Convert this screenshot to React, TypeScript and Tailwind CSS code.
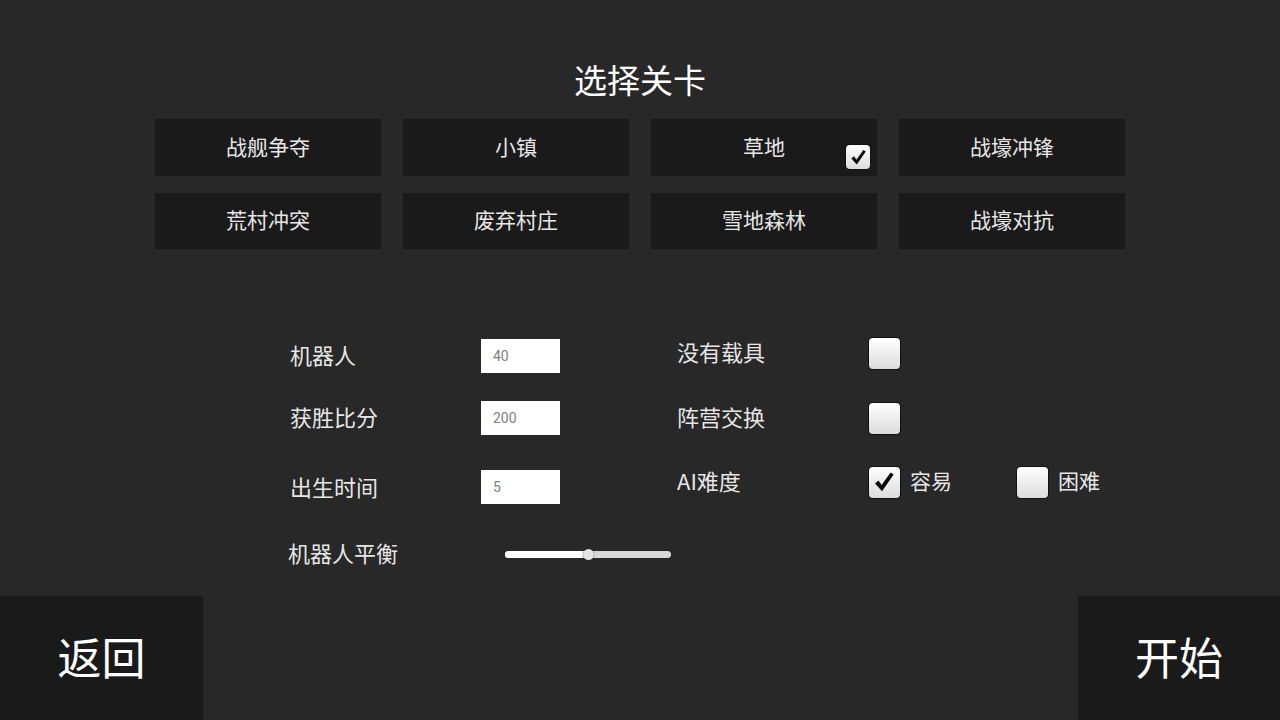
import React from 'react';

const maps = ['战舰争夺', '小镇', '草地', '战壕冲锋', '荒村冲突', '废弃村庄', '雪地森林', '战壕对抗'];

function CheckBox({ checked = false, size = 31 }: { checked?: boolean; size?: number }) {
  return (
    <div
      className="flex items-center justify-center rounded-[4px] bg-gradient-to-b from-white to-[#dcdcdc] shadow-[0_0_0_1px_#111]"
      style={{ width: size, height: size }}
    >
      {checked && (
        <svg viewBox="0 0 24 24" style={{ width: size * 0.78, height: size * 0.78 }}>
          <path d="M3 13.5 L6.5 10.5 L9.5 15 L18.5 2.5 L21.5 4.5 L10 21 Z" fill="#0a0a0a" />
        </svg>
      )}
    </div>
  );
}

function NumberBox({ value }: { value: string }) {
  return (
    <div className="flex h-[34px] w-[79px] items-center bg-white pl-[12px] text-[14px] text-[#808080] font-['Roboto',sans-serif]">
      {value}
    </div>
  );
}

export default function App() {
  return (
    <div className="flex h-[720px] w-[1280px] flex-col overflow-hidden bg-[#282828] font-['Noto_Sans_CJK_SC','Noto_Sans',sans-serif] text-[#e6e6e6]">
      {/* Title */}
      <h1 className="pt-[58px] text-center text-[33px] leading-[42px] text-white">选择关卡</h1>

      {/* Map grid */}
      <div className="mt-[19px] ml-[155px] grid w-[970px] grid-cols-4 gap-x-[22px] gap-y-[17px]">
        {maps.map((m, i) => (
          <div
            key={m}
            className={`relative flex items-center justify-center bg-[#1b1a1b] pb-[2px] text-[21px] ${i < 4 ? 'h-[57px]' : 'h-[56px]'}`}
          >
            {m}
            {m === '草地' && (
              <div className="absolute right-[7px] top-[26px]">
                <CheckBox checked size={24} />
              </div>
            )}
          </div>
        ))}
      </div>

      {/* Settings */}
      <div className="ml-[290px] flex">
        <div className="w-[387px] pt-[90px]">
          <div className="flex h-[34px] items-center">
            <span className="w-[191px] pb-[4px] text-[22px]">机器人</span>
            <NumberBox value="40" />
          </div>
          <div className="mt-[28px] flex h-[34px] items-center">
            <span className="w-[191px] pb-[4px] text-[22px]">获胜比分</span>
            <NumberBox value="200" />
          </div>
          <div className="mt-[35px] flex h-[34px] items-center">
            <span className="w-[191px] pb-[1px] text-[22px]">出生时间</span>
            <NumberBox value="5" />
          </div>
          <div className="-ml-[2px] mt-[38px] flex h-[24px] items-center">
            <span className="w-[217px] pb-[4px] text-[22px]">机器人平衡</span>
            <div className="relative h-[7px] w-[166px] rounded-full bg-[#d8d8d8]">
              <div className="h-full w-[83px] rounded-full bg-white" />
              <div className="absolute left-[78px] top-[-2px] h-[11px] w-[11px] rounded-full bg-[#e4e4e4] shadow-[0_0_1px_#000]" />
            </div>
          </div>
        </div>

        <div className="pt-[88px]">
          <div className="flex h-[32px] items-center">
            <span className="w-[192px] pb-[4px] text-[22px]">没有载具</span>
            <CheckBox />
          </div>
          <div className="mt-[33px] flex h-[32px] items-center">
            <span className="w-[192px] pb-[4px] text-[22px]">阵营交换</span>
            <CheckBox />
          </div>
          <div className="mt-[32px] flex h-[32px] items-center">
            <span className="w-[192px] pb-[4px] text-[22px]">AI难度</span>
            <div className="flex w-[148px] items-center gap-[10px]">
              <CheckBox checked />
              <span className="pb-[2px] text-[21px]">容易</span>
            </div>
            <div className="flex items-center gap-[10px]">
              <CheckBox />
              <span className="pb-[2px] text-[21px]">困难</span>
            </div>
          </div>
        </div>
      </div>

      {/* Bottom buttons */}
      <div className="mt-auto flex justify-between">
        <button className="flex h-[124px] w-[203px] items-center justify-center bg-[#1b1a1b] pb-[4px] text-[44px] text-white">返回</button>
        <button className="flex h-[124px] w-[202px] items-center justify-center bg-[#1b1a1b] pb-[4px] text-[44px] text-white">开始</button>
      </div>
    </div>
  );
}
